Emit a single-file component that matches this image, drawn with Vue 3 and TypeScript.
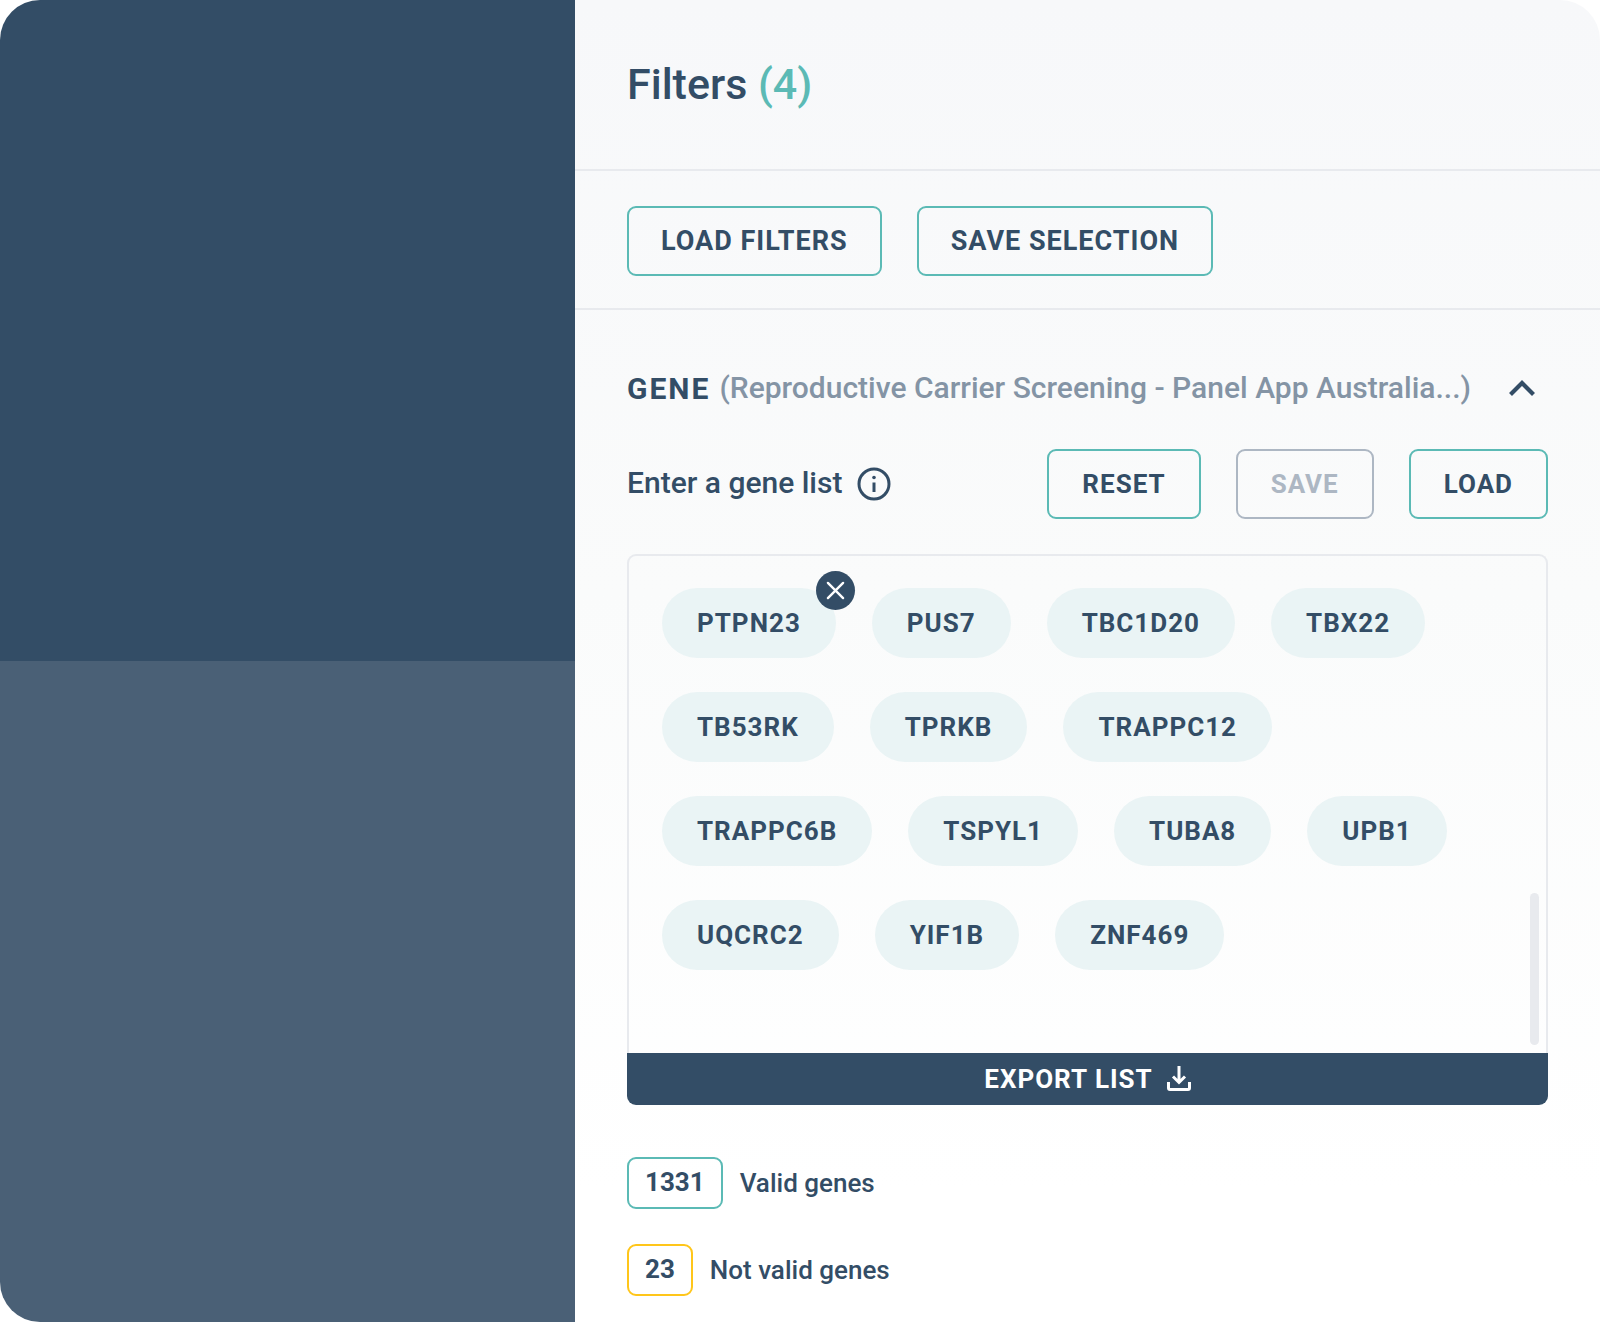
<script setup lang="ts">
import { ref } from 'vue'

const activeFilters = ref(4)
const panelName = ref('(Reproductive Carrier Screening - Panel App Australia...)')
const highlighted = ref('PTPN23')
const genes = ref<string[]>([
  'PTPN23', 'PUS7', 'TBC1D20', 'TBX22',
  'TB53RK', 'TPRKB', 'TRAPPC12',
  'TRAPPC6B', 'TSPYL1', 'TUBA8', 'UPB1',
  'UQCRC2', 'YIF1B', 'ZNF469',
])
const expanded = ref(true)

function removeGene(name: string) {
  genes.value = genes.value.filter((g) => g !== name)
}
</script>

<template>
  <div class="frame">
    <div class="backdrop" aria-hidden="true">
      <div class="backdrop-top"></div>
      <div class="backdrop-bottom"></div>
    </div>

    <main class="panel">
      <header class="panel-header">
        <h1 class="title">Filters <span class="count">({{ activeFilters }})</span></h1>
      </header>

      <div class="toolbar">
        <button type="button" class="btn btn-large">LOAD FILTERS</button>
        <button type="button" class="btn btn-large">SAVE SELECTION</button>
      </div>

      <section class="gene">
        <div class="gene-head">
          <h2 class="gene-title">GENE</h2>
          <span class="gene-panel">{{ panelName }}</span>
          <button type="button" class="toggle" aria-label="Collapse gene section" :aria-expanded="expanded" @click="expanded = !expanded">
            <svg width="26" height="16" viewBox="0 0 26 16" fill="none">
              <path d="M1.500 14.500 13 3l11.500 11.500" stroke="currentColor" stroke-width="4.200" />
            </svg>
          </button>
        </div>

        <div class="entry">
          <span class="entry-label">Enter a gene list</span>
          <button type="button" class="info" aria-label="Gene list help">
            <svg width="34" height="34" viewBox="0 0 34 34" fill="none">
              <circle cx="17" cy="17" r="15" stroke="currentColor" stroke-width="3" />
              <circle cx="17" cy="10.500" r="1.800" fill="currentColor" />
              <path d="M17 15.500v9.500" stroke="currentColor" stroke-width="3" />
            </svg>
          </button>
          <div class="entry-actions">
            <button type="button" class="btn">RESET</button>
            <button type="button" class="btn" disabled>SAVE</button>
            <button type="button" class="btn">LOAD</button>
          </div>
        </div>

        <div class="listbox">
          <ul class="chips">
            <li v-for="gene in genes" :key="gene" class="chip">
              {{ gene }}
              <button v-if="gene === highlighted" type="button" class="remove" :aria-label="`Remove ${gene}`" @click="removeGene(gene)">
                <svg width="19" height="19" viewBox="0 0 20 20" fill="none">
                  <path d="M2 2l16 16M18 2 2 18" stroke="currentColor" stroke-width="2.500" stroke-linecap="round" />
                </svg>
              </button>
            </li>
          </ul>
          <div class="thumb" aria-hidden="true"></div>
        </div>
        <button type="button" class="export">
          EXPORT LIST
          <svg width="24" height="26" viewBox="0 0 24 26" fill="none" stroke="currentColor" stroke-width="3">
            <path d="M12 0v16M6 10.500l6 6 6-6" />
            <path d="M1.500 16v6a1.500 1.500 0 0 0 1.500 1.500h18a1.500 1.500 0 0 0 1.500-1.500v-6" />
          </svg>
        </button>

        <div class="stats">
          <div class="stat"><span class="badge">1331</span>Valid genes</div>
          <div class="stat"><span class="badge invalid">23</span>Not valid genes</div>
        </div>
      </section>
    </main>
  </div>
</template>

<style>
body {
  margin: 0;
  background: #fff;
}
</style>

<style scoped>
.frame {
  display: grid;
  grid-template-columns: 575fr 1025fr;
  min-height: 100vh;
  border-radius: 40px;
  overflow: hidden;
  font-family: Roboto, "Liberation Sans", sans-serif;
  color: #334d66;
}
.backdrop {
  display: grid;
  grid-template-rows: 1fr 1fr;
}
.backdrop-top {
  background: #334d66;
}
.backdrop-bottom {
  background: #4a6076;
}
.panel {
  min-width: 0;
  background: linear-gradient(#f7f8fa, #fafbfb 45%, #fff 90%);
}
.panel-header {
  padding: 58px 52px 59px;
  border-bottom: 2px solid #e8eaee;
}
.title {
  margin: 0;
  font-size: 43px;
  line-height: 52px;
  font-weight: 500;
}
.count {
  color: #5bbab5;
}
.toolbar {
  display: flex;
  gap: 35px;
  padding: 35px 52px 32px;
  border-bottom: 2px solid #e8eaee;
}
button {
  margin: 0;
  padding: 0;
  border: 0;
  background: none;
  color: inherit;
  font-family: inherit;
  cursor: pointer;
}
svg {
  display: block;
}
.btn {
  height: 70px;
  padding: 0 33px;
  border: 2px solid #5bbab5;
  border-radius: 9px;
  font-size: 26px;
  line-height: 32px;
  font-weight: 700;
  letter-spacing: 1px;
  white-space: nowrap;
}
.btn-large {
  padding: 0 32px;
  font-size: 27px;
}
.btn:disabled {
  border-color: #adb7c3;
  color: #adb7c3;
  cursor: default;
}
.gene {
  padding: 60px 52px 26px;
}
.gene-head {
  display: flex;
  align-items: center;
  gap: 9px;
  height: 36px;
}
.gene-title {
  margin: 0;
  padding-top: 2px;
  font-size: 30px;
  line-height: 36px;
  font-weight: 700;
  letter-spacing: 2px;
}
.gene-panel {
  flex: 1;
  min-width: 0;
  font-size: 30px;
  line-height: 36px;
  font-weight: 500;
  color: #8494a5;
  white-space: nowrap;
}
.toggle {
  padding: 0 13px;
}
.entry {
  display: flex;
  align-items: center;
  margin: 43px 0 35px;
}
.entry-label {
  padding-bottom: 2px;
  font-size: 30px;
  line-height: 36px;
  font-weight: 500;
}
.info {
  margin-left: 15px;
}
.entry-actions {
  display: flex;
  gap: 35px;
  margin-left: auto;
}
.listbox {
  position: relative;
  padding: 32px 33px 83px;
  border: 2px solid #e8eaee;
  border-bottom: 0;
  border-radius: 9px 9px 0 0;
}
.chips {
  display: flex;
  flex-wrap: wrap;
  gap: 34px 36px;
  margin: 0;
  padding: 0;
  list-style: none;
}
.chip {
  position: relative;
  padding: 0 35px;
  border-radius: 35px;
  background: #eaf4f5;
  font-size: 26px;
  line-height: 70px;
  font-weight: 700;
  letter-spacing: 1px;
}
.remove {
  position: absolute;
  top: -17px;
  right: -19px;
  display: grid;
  place-items: center;
  width: 39px;
  height: 39px;
  border-radius: 50%;
  background: #334d66;
  color: #fff;
}
.thumb {
  position: absolute;
  right: 7px;
  bottom: 8px;
  width: 9px;
  height: 152px;
  border-radius: 5px;
  background: #e8eaee;
}
.export {
  display: flex;
  align-items: center;
  justify-content: center;
  gap: 14px;
  width: 100%;
  height: 52px;
  border-radius: 0 0 9px 9px;
  background: #334d66;
  color: #fff;
  font-size: 26px;
  line-height: 32px;
  font-weight: 700;
  letter-spacing: 1px;
}
.stats {
  display: grid;
  gap: 35px;
  margin-top: 52px;
}
.stat {
  display: flex;
  align-items: center;
  gap: 17px;
  font-size: 26px;
  line-height: 46px;
  font-weight: 500;
}
.badge {
  padding: 0 16px 2px;
  border: 2px solid #5bbab5;
  border-radius: 9px;
  font-weight: 700;
}
.badge.invalid {
  border-color: #ffc61a;
}
</style>
